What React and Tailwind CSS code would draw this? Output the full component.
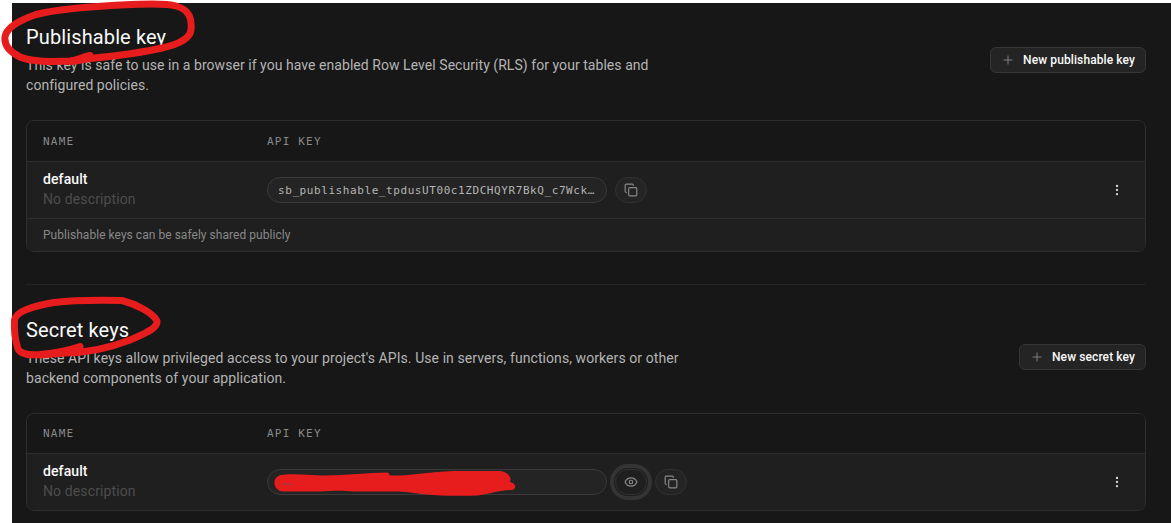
import React from "react";
import { Copy, EllipsisVertical, Eye, Plus } from "lucide-react";

const SectionHeader = ({ title, lines, button, textClass, buttonClass }) => (
  <div className="flex items-start justify-between">
    <div>
      <h2 className="h-7 text-[20px] leading-7 tracking-[0.12px] text-[#fafafa]">
        {title}
      </h2>
      <p className={`mt-1 text-sm leading-5 text-[#b4b4b4] ${textClass}`}>
        {lines.map((line) => (
          <span key={line} className="block">
            {line}
          </span>
        ))}
      </p>
    </div>
    <button
      className={`flex h-[26px] items-center justify-between rounded-md border border-[#363636] bg-[#242424] px-[10px] text-xs font-medium tracking-[0.1px] text-[#fafafa] ${buttonClass}`}
    >
      <Plus size={14} className="text-[#898989]" strokeWidth={1.5} />
      <span>{button}</span>
    </button>
  </div>
);

const TableHead = ({ className }) => (
  <div
    className={`flex items-center border-b border-[#2e2e2e] bg-[#171717] px-4 pt-0.5 font-['DejaVu_Sans_Mono',monospace] text-[11px] tracking-[1.2px] text-[#898989] ${className}`}
  >
    <span className="w-56">NAME</span>
    <span>API KEY</span>
  </div>
);

const KeyRow = ({ children, className }) => (
  <div className={`flex items-center bg-[#1f1f1f] px-4 ${className}`}>
    <div className="w-56 pb-0.5 text-sm leading-5">
      <p className="font-medium tracking-[0.1px] text-[#fafafa]">default</p>
      <p className="tracking-[0.12px] text-[#4d4d4d]">No description</p>
    </div>
    <div className="flex items-center gap-2">{children}</div>
    <EllipsisVertical size={14} className="mr-[5px] ml-auto text-[#d0d0d0]" />
  </div>
);

const KeyField = ({ children }) => (
  <div className="flex h-[26px] w-[340px] items-center rounded-full border border-[#393939] bg-[#242424] px-[10px] pt-0.5 font-['DejaVu_Sans_Mono',monospace] text-[11px] tracking-[0.58px] whitespace-nowrap text-[#b4b4b4]">
    {children}
  </div>
);

const CopyButton = () => (
  <button className="flex h-[26px] w-8 items-center justify-center rounded-full border border-[#313131] bg-[#242424] text-[#898989]">
    <Copy size={14} strokeWidth={2} />
  </button>
);

// hand drawn red marker strokes
const Marker = () => (
  <svg
    className="pointer-events-none absolute top-0 left-0"
    width="1171"
    height="523"
    viewBox="0 0 1171 523"
    fill="none"
    stroke="#e71d1d"
    strokeWidth="7"
    strokeLinecap="round"
    strokeLinejoin="round"
  >
    <path d="M90 55.500C82 57 78 60 70 61C50 62 31 62 20 57C10 52 4 45 5 37C6 28 20 20 36 14.500C58 9 95 6 132 4.500C150 4 166 3 176 6C190 10 192 19 191 30C190 39 176 45 162 48C140 53 116 56 90 58.500L72 61.500" />
    <path d="M80 346.500C70 350 55 353 40 354.500C30 355 21 355 18 349C15 340 14 330 14.500 320C16 311 34 306 54 302.500C75 300 100 300 122 300.500C136 304 153 313 157 321C158 329 143 334 130 340C112 347 92 353 64 353L40 355" />
    <path
      fill="#e71d1d"
      stroke="none"
      d="M281 475C290 473 306 475 326 475.500C345 475 370 473 387 472.500C390 473 388 475 391 475.500C410 476 430 472 453 471L500 471C508 472 512 477 510 482C516 483 517 489 512 490C501 490 489 494 478 495.500C460 496 440 496 421 494C407 492 402 491.500 392 491.500H354C340 490 330 491 320 491.500H283C272 490 272 477 281 475Z"
    />
    <path
      d="M282.500 483.500L286.500 484.300M288 484.500L292 484.200"
      stroke="#84484a"
      strokeWidth="1"
    />
  </svg>
);

const App = () => {
  const publishableLines = [
    "This key is safe to use in a browser if you have enabled Row Level Security (RLS) for your tables and",
    "configured policies.",
  ];
  const secretLines = [
    "These API keys allow privileged access to your project's APIs. Use in servers, functions, workers or other",
    "backend components of your application.",
  ];

  return (
    <div className="relative h-[523px] w-[1171px] overflow-hidden bg-white pt-[3px] pl-3 font-['Roboto',sans-serif]">
      <div className="h-[520px] bg-[#171717] pt-5 pr-[25px] pl-[14px]">
        <section>
          <SectionHeader
            title="Publishable key"
            lines={publishableLines}
            button="New publishable key"
            textClass="tracking-[0.05px]"
            buttonClass="mt-6 w-[156px]"
          />
          <div className="mt-[25px] overflow-hidden rounded-lg border border-[#2e2e2e]">
            <TableHead className="h-[41px]" />
            <KeyRow className="h-14">
              <KeyField>sb_publishable_tpdusUT00c1ZDCHQYR7BkQ_c7Wck…</KeyField>
              <CopyButton />
            </KeyRow>
            <div className="flex h-[33px] items-center border-t border-[#2e2e2e] bg-[#1f1f1f] px-4 text-xs tracking-[0.04px] text-[#898989]">
              Publishable keys can be safely shared publicly
            </div>
          </div>
        </section>
        <hr className="mt-8 border-[#242424]" />
        <section className="mt-[31px]">
          <SectionHeader
            title="Secret keys"
            lines={secretLines}
            button="New secret key"
            textClass="tracking-[0.075px]"
            buttonClass="mt-7 w-[127px]"
          />
          <div className="mt-[25px] overflow-hidden rounded-lg border border-[#2e2e2e]">
            <TableHead className="h-10" />
            <KeyRow className="h-14">
              <KeyField />
              <button className="flex h-[26px] w-8 items-center justify-center rounded-full border border-[#313131] bg-[#1f1f1f] text-[#898989] outline-4 outline-offset-1 outline-[#343434]">
                <Eye size={14} strokeWidth={2} />
              </button>
              <CopyButton />
            </KeyRow>
          </div>
        </section>
      </div>
      <Marker />
    </div>
  );
};

export default App;
